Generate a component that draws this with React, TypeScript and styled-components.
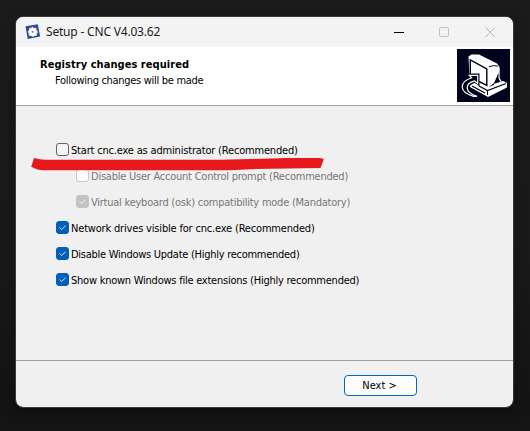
import React from 'react';
import styled, { createGlobalStyle } from 'styled-components';

const GlobalStyle = createGlobalStyle`
  * { box-sizing: border-box; }
  html, body { margin: 0; background: #171717; }
`;

const Desktop = styled.main`
  width: 530px;
  height: 431px;
  padding: 16px 0 0 15px;
  overflow: hidden;
  background: linear-gradient(#1b1b1b 0, #191919 60%, #131313 95%, #151515 100%);
  font-family: 'DejaVu Sans Condensed', 'DejaVu Sans', sans-serif;
  font-size: 11px;
  color: #000;
`;

const Window = styled.section`
  position: relative;
  display: flex;
  flex-direction: column;
  width: 499px;
  height: 392px;
  border: 1px solid #3b3b3b;
  border-radius: 8px;
  background: #f0f0f0;
  background-clip: padding-box;
  box-shadow: 0 4px 12px rgba(0, 0, 0, 0.3);
`;

const TitleBar = styled.header`
  display: flex;
  align-items: center;
  height: 30px;
  padding-left: 9px;
  border-radius: 7px 7px 0 0;
  background: #f3f3f3;
`;

const Text = styled.span<{ $spacing?: number }>`
  line-height: 16px;
  white-space: nowrap;
  letter-spacing: ${(p) => p.$spacing ?? 0}px;
`;

const Title = styled(Text)`
  flex: 1;
  margin-left: 5px;
  font-family: 'Noto Sans', sans-serif;
  font-size: 12px;
  color: #1c1c1c;
`;

const Controls = styled.div`
  display: flex;
`;

const ControlButton = styled.button`
  display: flex;
  align-items: center;
  justify-content: center;
  width: 45.5px;
  height: 29px;
  padding: 0;
  border: 0;
  background: none;
`;

const Banner = styled.div`
  display: flex;
  justify-content: space-between;
  height: 59px;
  padding: 2px 3px 0 24px;
  border-bottom: 1px solid #a0a0a0;
  background: #fff;
`;

const Headings = styled.div`
  display: flex;
  flex-direction: column;
  padding-top: 8px;
`;

const Heading = styled(Text)`
  font-weight: bold;
`;

const SubHeading = styled(Text)`
  padding-left: 15px;
`;

const Options = styled.div`
  display: flex;
  flex: 1;
  flex-direction: column;
  gap: 10px;
  padding: 36px 0 0 40px;
`;

const Option = styled.label<{ $disabled?: boolean }>`
  display: flex;
  align-items: flex-start;
  gap: 2px;
  height: 16px;
  padding-top: 1px;
  margin-left: ${(p) => (p.$disabled ? 20 : 0)}px;
  color: ${(p) => (p.$disabled ? '#777' : '#000')};
`;

const Box = styled.span<{ $checked?: boolean; $disabled?: boolean }>`
  display: flex;
  flex: none;
  width: 13px;
  height: 13px;
  border: 1px solid
    ${(p) => (p.$checked ? (p.$disabled ? '#c3c3c3' : '#005fb8') : p.$disabled ? '#c8c8c8' : '#626262')};
  border-radius: 3px;
  background: ${(p) => (p.$checked ? (p.$disabled ? '#c3c3c3' : '#005fb8') : p.$disabled ? '#fbfbfb' : '#f5f5f5')};
`;

const Footer = styled.footer`
  display: flex;
  justify-content: flex-end;
  height: 47px;
  padding: 14px 96px 0 0;
  border-top: 1px solid #a0a0a0;
`;

const NextButton = styled.button`
  width: 73px;
  height: 21px;
  padding: 1px 2px 0 0;
  border: 1px solid #0067c0;
  border-radius: 4px;
  background: #fdfdfd;
  color: #000;
  font: inherit;
  line-height: 18px;
`;

const MarkerStroke = styled.svg`
  position: absolute;
  left: 14px;
  top: 137px;
  pointer-events: none;
`;

const AppIcon = () => (
  <svg width="16" height="16" viewBox="0 0 16 16">
    <path d="M0.5 2.3 12.8.2 15.1 12.6 2.7 15.1Z" fill="#2f4b8c" />
    <path d="m7.2 2.7 1.9 1.2 2.2-.2.3 2.3 1.5 1.9-1.2 1.8-.1 2.1-2.2.1-1.8 1.1-1.8-1.1-2.3-.1.1-2.1-1.1-2 1.4-1.9.3-2 2-.1Z" fill="#dce4f7" />
    <circle cx="7.7" cy="7.8" r="3.6" fill="#fff" />
    <circle cx="7.7" cy="7.8" r="1.1" fill="#c7696b" />
  </svg>
);

const SetupArt = () => (
  <svg width="53" height="53" viewBox="0 0 53 53">
    <defs>
      <pattern id="dither" width="2" height="2" patternUnits="userSpaceOnUse">
        <rect width="2" height="2" fill="#000016" />
        <rect width="1" height="1" fill="#070736" />
      </pattern>
    </defs>
    <rect width="53" height="53" fill="url(#dither)" />
    {/* keyboard base */}
    <path d="M12 34 18 31 32 38 46 32 50 34V38.5L31 48 12 37.5Z" fill="#fff" />
    <path d="M22 37 30.5 41.5 49 34.5" fill="none" stroke="#000016" strokeWidth="1.3" />
    <path d="M30.5 42V46" stroke="#000016" strokeWidth="1" />
    <path d="M15 37 28 44" stroke="#000016" strokeWidth="1.4" />
    {/* monitor shell, its dark side and the stand */}
    <path d="M11.5 7.5 14.5 5.5 22 5.5 40 14.5 42.5 18 42 23 37 34 32 38 27 37 12.5 29Z" fill="#fff" />
    <path d="M42 19V29L44.5 33.5 37 35.5" fill="none" stroke="#fff" strokeWidth="1.3" />
    <path d="M41.3 24V31L42.5 32.5 38.5 33.5Z" fill="#000016" />
    <path d="M32 17.7Q37 15.8 40.8 17.2" fill="none" stroke="#000016" strokeWidth="1" />
    {/* screen bezel */}
    <path d="M13.3 28V11L29.8 20V36.3L22 32.5" fill="none" stroke="#000016" strokeWidth="1.4" />
    {/* arrow */}
    <path d="M11.5 25.5H21.5V35.5L18 32.8C10 35 8 42 20 47L15 48.3C2 43 2 33 13.7 28.8Z" fill="#000016" stroke="#000016" strokeWidth="2" />
    <path d="M12.3 26.3H20.7V34.5L17.6 31.8C7.5 34.5 7 43 20 47.3H16.5C1.5 43 2 33 14.7 28.8Z" fill="#000016" stroke="#fff" strokeWidth="1.2" />
  </svg>
);

const Check = ({ color }: { color: string }) => (
  <svg width="11" height="11" viewBox="0 0 11 11" fill="none">
    <path d="M2.6 5.5 4.7 7.5 8.6 3.6" stroke={color} strokeWidth="1" />
  </svg>
);

type OptionData = { label: string; spacing: number; checked?: boolean; disabled?: boolean };

const options: OptionData[] = [
  { label: 'Start cnc.exe as administrator (Recommended)', spacing: -0.18 },
  { label: 'Disable User Account Control prompt (Recommended)', spacing: -0.237, disabled: true },
  { label: 'Virtual keyboard (osk) compatibility mode (Mandatory)', spacing: -0.24, checked: true, disabled: true },
  { label: 'Network drives visible for cnc.exe (Recommended)', spacing: -0.18, checked: true },
  { label: 'Disable Windows Update (Highly recommended)', spacing: -0.27, checked: true },
  { label: 'Show known Windows file extensions (Highly recommended)', spacing: -0.24, checked: true },
];

export default function App() {
  return (
    <Desktop>
      <GlobalStyle />
      <Window>
        <TitleBar>
          <AppIcon />
          <Title $spacing={-0.19}>Setup - CNC V4.03.62</Title>
          <Controls>
            <ControlButton aria-label="Minimize">
              <svg width="11" height="11"><path d="M0 5.5H10" stroke="#000" /></svg>
            </ControlButton>
            <ControlButton aria-label="Maximize">
              <svg width="11" height="11"><rect x=".5" y=".5" width="9" height="9" rx=".7" fill="none" stroke="#c1c1c1" /></svg>
            </ControlButton>
            <ControlButton aria-label="Close">
              <svg width="11" height="11"><path d="m.5.5 9.5 9.5M10 .5.5 10" stroke="#b5b5b5" /></svg>
            </ControlButton>
          </Controls>
        </TitleBar>
        <Banner>
          <Headings>
            <Heading $spacing={0.05}>Registry changes required</Heading>
            <SubHeading $spacing={-0.3}>Following changes will be made</SubHeading>
          </Headings>
          <SetupArt />
        </Banner>
        <Options>
          {options.map((o) => (
            <Option key={o.label} $disabled={o.disabled}>
              <Box $checked={o.checked} $disabled={o.disabled}>
                {o.checked && <Check color={o.disabled ? '#f4f4f4' : '#d8e8f7'} />}
              </Box>
              <Text $spacing={o.spacing}>{o.label}</Text>
            </Option>
          ))}
        </Options>
        <Footer>
          <NextButton>Next &gt;</NextButton>
        </Footer>
        <MarkerStroke width="296" height="20" viewBox="0 0 296 20">
          <path d="M4 4 1.2 12.8Q8 16.3 13 16.3H200L226 15 290.5 14 293.7 5.5Q293 4 290 4H257L220 5 191 5.8H15Q10 5.8 4 4Z" fill="#e8191c" />
        </MarkerStroke>
      </Window>
    </Desktop>
  );
}
